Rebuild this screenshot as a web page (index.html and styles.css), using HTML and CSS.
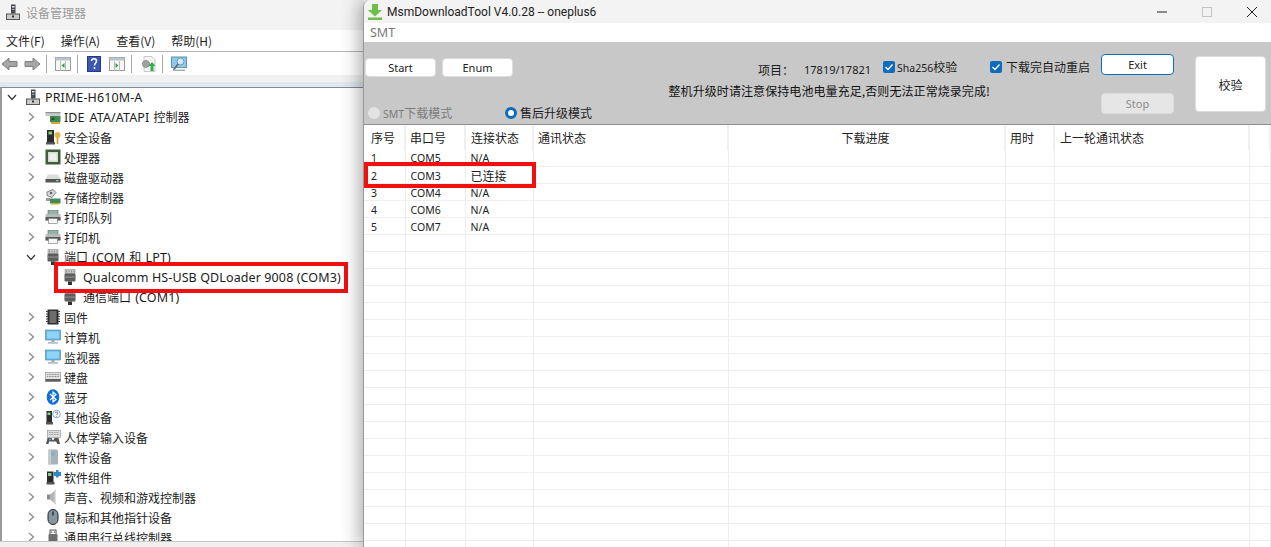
FILE: index.html
```html
<!DOCTYPE html>
<html lang="zh-CN">
<head>
<meta charset="utf-8">
<title>设备管理器 / MsmDownloadTool</title>
<link rel="stylesheet" href="styles.css">
</head>
<body>
<svg class="sprites" width="0" height="0" aria-hidden="true">
  <symbol id="chev-r" viewBox="0 0 10 10"><path d="M3 1l4.5 4L3 9" fill="none" stroke="#8c8c8c" stroke-width="1.3"/></symbol>
  <symbol id="chev-d" viewBox="0 0 10 10"><path d="M1 3l4 4.5L9 3" fill="none" stroke="#3c3c3c" stroke-width="1.3"/></symbol>
  <symbol id="pc" viewBox="0 0 16 16"><rect x="6" y="0.5" width="4.5" height="9" fill="#4a4a4a"/><rect x="7" y="2" width="2.5" height="1.5" fill="#e8e8e8"/><rect x="7" y="5" width="2.5" height="1" fill="#9ad"/><rect x="1.5" y="10" width="13" height="5.5" fill="#c9c9c9" stroke="#555"/><rect x="7" y="11.5" width="2" height="2" fill="#333"/></symbol>
  <symbol id="ide" viewBox="0 0 16 16"><rect x="0.5" y="3" width="15" height="4" fill="#c9c9c9"/><rect x="0.5" y="3" width="15" height="1.2" fill="#8f8f8f"/><rect x="5" y="7" width="10.5" height="6" fill="#3f8a55"/><rect x="6.5" y="8.5" width="3" height="2.5" fill="#1e5a34"/><rect x="6" y="13" width="9" height="2" fill="#d8a93a"/></symbol>
  <symbol id="sec" viewBox="0 0 16 16"><rect x="2" y="1" width="7" height="12" fill="#2b2b2b"/><rect x="3.5" y="2.5" width="3.5" height="3" fill="#7fd07f"/><rect x="1" y="13" width="9" height="2.5" fill="#555"/><circle cx="12.5" cy="6" r="3" fill="#e6b64d"/><rect x="11.6" y="8" width="1.8" height="7" fill="#d9a537"/></symbol>
  <symbol id="cpu" viewBox="0 0 16 16"><rect x="0.5" y="0.5" width="15" height="15" fill="#3d5f3a"/><rect x="3" y="3" width="10" height="10" fill="#d9dcd6"/><rect x="4.5" y="4.5" width="7" height="7" fill="#eef0ea"/></symbol>
  <symbol id="disk" viewBox="0 0 16 16"><path d="M3 5.5h10l2.5 4.5H.5z" fill="#dcdcdc"/><rect x="0.5" y="10" width="15" height="3.5" fill="#555"/><rect x="11" y="11" width="2.5" height="1.2" fill="#8fd48f"/></symbol>
  <symbol id="stor" viewBox="0 0 16 16"><path d="M2 3l6-2.5 3 3-4 5-5-2z" fill="#d9d9d9" stroke="#555" stroke-width=".7"/><circle cx="6" cy="4" r="1.3" fill="#666"/><rect x="5" y="9.5" width="10.5" height="5" fill="#3f8a55"/><rect x="6" y="14" width="8" height="1.5" fill="#d8a93a"/><rect x="1" y="9" width="4" height="3" fill="#999"/></symbol>
  <symbol id="print" viewBox="0 0 16 16"><rect x="3" y="1.5" width="10" height="4" fill="#8fb5a8" stroke="#666" stroke-width=".6"/><rect x="0.5" y="5" width="15" height="6.5" rx="1" fill="#b9b9b9"/><rect x="0.5" y="8" width="15" height="3.5" fill="#5b5b5b"/><rect x="3.5" y="9.5" width="9" height="5" fill="#f5f5f5" stroke="#777" stroke-width=".6"/></symbol>
  <symbol id="port" viewBox="0 0 16 16"><rect x="3" y="0.5" width="10" height="4" fill="#c8c8c8" stroke="#888" stroke-width=".5"/><path d="M4.5 1.5v2M7 1.5v2M9.5 1.5v2M12 1.5v2" stroke="#777" stroke-width=".7"/><rect x="2.5" y="4.5" width="11" height="8" rx="1" fill="#5e5e5e"/><rect x="2.5" y="7.5" width="11" height="1.2" fill="#8d8d8d"/><rect x="6" y="12.5" width="4" height="3.5" fill="#333"/></symbol>
  <symbol id="chip" viewBox="0 0 16 16"><rect x="2.5" y="0.5" width="11" height="15" rx=".5" fill="#2e2e2e"/><rect x="4.5" y="2" width="7" height="12" fill="#6d6d6d"/><path d="M1 2.5h2M1 5h2M1 7.5h2M1 10h2M1 12.5h2M13 2.5h2M13 5h2M13 7.5h2M13 10h2M13 12.5h2" stroke="#444" stroke-width="1"/></symbol>
  <symbol id="comp" viewBox="0 0 16 16"><rect x="0.5" y="1" width="15" height="10" fill="#58b7ea" stroke="#6a8aa0" stroke-width=".7"/><rect x="2" y="2.5" width="12" height="7" fill="#8fd3f5"/><rect x="6.5" y="11" width="3" height="2" fill="#9aa"/><rect x="3" y="13" width="10" height="1.8" fill="#b8c0c6"/></symbol>
  <symbol id="kbd" viewBox="0 0 16 16"><rect x="0.5" y="3.5" width="15" height="9" fill="#e2e2e2" stroke="#888" stroke-width=".6"/><path d="M2 5.500h12M2 7.500h12" stroke="#8a8a8a" stroke-width="1" stroke-dasharray="1 .6"/><rect x="0.5" y="10" width="15" height="2.500" fill="#5f5f5f"/></symbol>
  <symbol id="bt" viewBox="0 0 16 16"><ellipse cx="8" cy="8" rx="6.3" ry="7.8" fill="#0a6fd6"/><path d="M5 5l6 5.500L8 13V3l3 2.500L5 11" fill="none" stroke="#fff" stroke-width="1.2"/></symbol>
  <symbol id="other" viewBox="0 0 16 16"><rect x="1.500" y="2" width="5.500" height="11" fill="#2b2b2b"/><rect x="2.500" y="3.500" width="3" height="2.500" fill="#7fd07f"/><rect x="1" y="13" width="7" height="2.500" fill="#555"/><circle cx="11.500" cy="5" r="3.800" fill="#f1f5f8" stroke="#7d9ab5" stroke-width=".8"/><path d="M10.200 4c.3-1.400 2.600-1.200 2.600.1 0 1-1.300 1-1.300 2M11.500 7v.8" fill="none" stroke="#4a6f93" stroke-width=".8"/></symbol>
  <symbol id="hid" viewBox="0 0 16 16"><rect x="2.500" y="1.500" width="13" height="7" fill="#dedede" stroke="#8d8d8d" stroke-width=".6"/><path d="M4 3.500h10M4 5.500h10" stroke="#999" stroke-dasharray="1 .6"/><path d="M1 15l1.500-6h4l1 2h1l1-2h4l1.500 6h-2.500l-1.500-2.500h-7L3.500 15z" fill="#555"/><circle cx="5" cy="10.500" r="1" fill="#5aa9e0"/></symbol>
  <symbol id="soft" viewBox="0 0 16 16"><rect x="3" y="0.500" width="10" height="15" rx="1.500" fill="#a9b2b8"/><rect x="3" y="0.500" width="3" height="15" rx="1" fill="#c5ccd0"/><rect x="6.500" y="3.500" width="3" height="3" fill="#6db5c8"/></symbol>
  <symbol id="softc" viewBox="0 0 16 16"><rect x="2" y="2.500" width="6.500" height="10.500" fill="#2b2b2b"/><rect x="3" y="4" width="3.500" height="3" fill="#7fd07f"/><rect x="1.500" y="13" width="8" height="2.500" fill="#555"/><path d="M9 3h2V1h2.500v2H16v4h-2.500v1.500H11V7H9z" fill="#2f86d2"/></symbol>
  <symbol id="sound" viewBox="0 0 16 16"><rect x="2" y="5.500" width="3" height="5" fill="#8b8b8b"/><path d="M5 5.500L11 .5v15l-6-5z" fill="#b5b5b5"/><rect x="9.500" y="1.500" width="1.500" height="13" fill="#dedede"/></symbol>
  <symbol id="mouse" viewBox="0 0 16 16"><rect x="3" y="0.500" width="10" height="15" rx="5" fill="#8795a3" stroke="#222" stroke-width="1"/><rect x="7.300" y="2.500" width="1.400" height="4" fill="#2e2e2e"/></symbol>
  <symbol id="usb" viewBox="0 0 16 16"><rect x="5" y="1" width="6" height="5" fill="none" stroke="#555"/><rect x="3.500" y="5" width="9" height="10" rx="1" fill="#6f6f6f"/><rect x="6" y="2.500" width="1.200" height="1.200" fill="#555"/><rect x="8.800" y="2.500" width="1.200" height="1.200" fill="#555"/></symbol>
  <symbol id="tb-panel" viewBox="0 0 16 16"><rect x="0.500" y="1.500" width="15" height="13" fill="#f7f7f7" stroke="#9a9a9a"/><rect x="0.500" y="1.500" width="15" height="3" fill="#b9c4cc"/><path d="M5.500 5v9.500M10.500 5v9.500" stroke="#bcbcbc"/></symbol>
</svg>

<section class="win devmgr">
  <header class="dm-title">
    <svg class="ico" width="16" height="16"><use href="#pc"/></svg>
    <span class="dm-title-text">设备管理器</span>
  </header>
  <nav class="dm-menu">
    <span>文件(F)</span><span>操作(A)</span><span>查看(V)</span><span>帮助(H)</span>
  </nav>
  <div class="dm-tools">
    <svg class="tb" width="17" height="14" viewBox="0 0 17 14"><path d="M1 7l7-6v3.500h8v5H8V13z" fill="#a7a7a7" stroke="#7f7f7f"/></svg>
    <svg class="tb tb-fwd" width="17" height="14" viewBox="0 0 17 14"><path d="M16 7L9 1v3.500H1v5h8V13z" fill="#a7a7a7" stroke="#7f7f7f"/></svg>
    <i class="sep"></i>
    <svg class="tb" width="16" height="16" viewBox="0 0 16 16"><use href="#tb-panel"/><path d="M9.500 7v5L6.500 9.500z" fill="#3c9a4a"/></svg>
    <i class="sep sep-wide"></i>
    <svg class="tb tb-help" width="14" height="16" viewBox="0 0 14 16"><rect x=".5" y=".5" width="13" height="15" fill="#3a57b5" stroke="#26398a"/><path d="M4.500 5c0-3 5-3 5 0 0 2-2 2-2 4.500M7.500 11v2" fill="none" stroke="#fff" stroke-width="1.500"/></svg>
    <svg class="tb" width="16" height="16" viewBox="0 0 16 16"><use href="#tb-panel"/><path d="M6.500 7v5l3-2.500z" fill="#3c9a4a"/></svg>
    <i class="sep"></i>
    <svg class="tb" width="16" height="16" viewBox="0 0 16 16"><path d="M4 .5h8l3 3v12H4z" fill="#f4f4f4" stroke="#b5b5b5" stroke-width=".7"/><circle cx="6" cy="8" r="3.500" fill="#a0a0a0" stroke="#7d7d7d" stroke-dasharray="1.500 .7"/><path d="M12 6l3.500 4H13.500v5h-3v-5H8.500z" fill="#2fb04c"/></svg>
    <i class="sep"></i>
    <svg class="tb" width="16" height="16" viewBox="0 0 16 16"><rect x=".5" y="1" width="15" height="10.500" fill="#8ecbea" stroke="#5f93ae"/><circle cx="9.500" cy="5.500" r="3.500" fill="#cfe9f6" stroke="#6f97ad"/><path d="M7 8l-4.500 6" stroke="#666" stroke-width="1.500"/><rect x="2" y="13.500" width="12" height="1.500" fill="#9fb0ba"/></svg>
  </div>
  <div class="dm-band"></div>
  <div class="tree">
    <div class="row l0"><svg class="chev" width="10" height="10"><use href="#chev-d"/></svg><svg class="ico" width="16" height="16"><use href="#pc"/></svg><span class="lat">PRIME-H610M-A</span></div>
    <div class="row l1"><svg class="chev" width="10" height="10"><use href="#chev-r"/></svg><svg class="ico" width="16" height="16"><use href="#ide"/></svg><span class="mix"><span class="lat">IDE ATA/ATAPI</span> 控制器</span></div>
    <div class="row l1"><svg class="chev" width="10" height="10"><use href="#chev-r"/></svg><svg class="ico" width="16" height="16"><use href="#sec"/></svg><span>安全设备</span></div>
    <div class="row l1"><svg class="chev" width="10" height="10"><use href="#chev-r"/></svg><svg class="ico" width="16" height="16"><use href="#cpu"/></svg><span>处理器</span></div>
    <div class="row l1"><svg class="chev" width="10" height="10"><use href="#chev-r"/></svg><svg class="ico" width="16" height="16"><use href="#disk"/></svg><span>磁盘驱动器</span></div>
    <div class="row l1"><svg class="chev" width="10" height="10"><use href="#chev-r"/></svg><svg class="ico" width="16" height="16"><use href="#stor"/></svg><span>存储控制器</span></div>
    <div class="row l1"><svg class="chev" width="10" height="10"><use href="#chev-r"/></svg><svg class="ico" width="16" height="16"><use href="#print"/></svg><span>打印队列</span></div>
    <div class="row l1"><svg class="chev" width="10" height="10"><use href="#chev-r"/></svg><svg class="ico" width="16" height="16"><use href="#print"/></svg><span>打印机</span></div>
    <div class="row l1"><svg class="chev" width="10" height="10"><use href="#chev-d"/></svg><svg class="ico" width="16" height="16"><use href="#port"/></svg><span class="mix">端口 <span class="lat">(COM</span> 和 <span class="lat">LPT)</span></span></div>
    <div class="row l2"><svg class="ico" width="16" height="16"><use href="#port"/></svg><span class="lat">Qualcomm HS-USB QDLoader 9008 (COM3)</span></div>
    <div class="row l2"><svg class="ico" width="16" height="16"><use href="#port"/></svg><span class="mix">通信端口 <span class="lat">(COM1)</span></span></div>
    <div class="row l1"><svg class="chev" width="10" height="10"><use href="#chev-r"/></svg><svg class="ico" width="16" height="16"><use href="#chip"/></svg><span>固件</span></div>
    <div class="row l1"><svg class="chev" width="10" height="10"><use href="#chev-r"/></svg><svg class="ico" width="16" height="16"><use href="#comp"/></svg><span>计算机</span></div>
    <div class="row l1"><svg class="chev" width="10" height="10"><use href="#chev-r"/></svg><svg class="ico" width="16" height="16"><use href="#comp"/></svg><span>监视器</span></div>
    <div class="row l1"><svg class="chev" width="10" height="10"><use href="#chev-r"/></svg><svg class="ico" width="16" height="16"><use href="#kbd"/></svg><span>键盘</span></div>
    <div class="row l1"><svg class="chev" width="10" height="10"><use href="#chev-r"/></svg><svg class="ico" width="16" height="16"><use href="#bt"/></svg><span>蓝牙</span></div>
    <div class="row l1"><svg class="chev" width="10" height="10"><use href="#chev-r"/></svg><svg class="ico" width="16" height="16"><use href="#other"/></svg><span>其他设备</span></div>
    <div class="row l1"><svg class="chev" width="10" height="10"><use href="#chev-r"/></svg><svg class="ico" width="16" height="16"><use href="#hid"/></svg><span>人体学输入设备</span></div>
    <div class="row l1"><svg class="chev" width="10" height="10"><use href="#chev-r"/></svg><svg class="ico" width="16" height="16"><use href="#soft"/></svg><span>软件设备</span></div>
    <div class="row l1"><svg class="chev" width="10" height="10"><use href="#chev-r"/></svg><svg class="ico" width="16" height="16"><use href="#softc"/></svg><span>软件组件</span></div>
    <div class="row l1"><svg class="chev" width="10" height="10"><use href="#chev-r"/></svg><svg class="ico" width="16" height="16"><use href="#sound"/></svg><span>声音、视频和游戏控制器</span></div>
    <div class="row l1"><svg class="chev" width="10" height="10"><use href="#chev-r"/></svg><svg class="ico" width="16" height="16"><use href="#mouse"/></svg><span>鼠标和其他指针设备</span></div>
    <div class="row l1"><svg class="chev" width="10" height="10"><use href="#chev-r"/></svg><svg class="ico" width="16" height="16"><use href="#usb"/></svg><span>通用串行总线控制器</span></div>
  </div>
  <div class="dm-status"></div>
  <div class="callout callout-port"></div>
</section>

<section class="win msm">
  <header class="ms-title">
    <svg class="ms-logo" width="16" height="16" viewBox="0 0 16 16"><path d="M5 0h6v6h4l-7 6.500L1 6h4z" fill="#6cc04a"/><rect x="1" y="13.500" width="14" height="2.500" fill="#6cc04a"/></svg>
    <span class="ms-title-text">MsmDownloadTool V4.0.28 -- oneplus6</span>
    <div class="caps">
      <svg width="12" height="12" viewBox="0 0 12 12"><path d="M1 6h10" stroke="#222"/></svg>
      <svg width="12" height="12" viewBox="0 0 12 12"><rect x="1.500" y="1.500" width="9" height="9" fill="none" stroke="#c4c4c4"/></svg>
      <svg width="12" height="12" viewBox="0 0 12 12"><path d="M1 1l10 10M11 1L1 11" stroke="#222"/></svg>
    </div>
  </header>
  <div class="ms-menu">SMT</div>
  <div class="panel">
    <div class="panel-main">
      <div class="top-row">
        <button class="btn btn-l">Start</button>
        <button class="btn btn-l">Enum</button>
        <span class="proj">项目：</span>
        <span class="proj-num">17819/17821</span>
        <label class="chk chk-a"><i class="box"><svg width="10" height="10" viewBox="0 0 10 10"><path d="M1.500 5l2.500 2.500 4.500-5" fill="none" stroke="#fff" stroke-width="1.300"/></svg></i><span><span class="small">Sha256</span>校验</span></label>
        <label class="chk chk-b"><i class="box"><svg width="10" height="10" viewBox="0 0 10 10"><path d="M1.500 5l2.500 2.500 4.500-5" fill="none" stroke="#fff" stroke-width="1.300"/></svg></i><span>下载完自动重启</span></label>
      </div>
      <p class="warn">整机升级时请注意保持电池电量充足,否则无法正常烧录完成!</p>
      <div class="radios">
        <label class="radio off"><i class="dot"></i><span><span class="small">SMT</span>下载模式</span></label>
        <label class="radio on"><i class="dot"></i><span>售后升级模式</span></label>
      </div>
    </div>
    <div class="panel-act">
      <button class="btn btn-exit">Exit</button>
      <button class="btn btn-stop" disabled>Stop</button>
    </div>
    <button class="btn btn-check">校验</button>
  </div>
  <div class="grid-wrap">
    <table class="grid">
      <colgroup><col class="c1"><col class="c2"><col class="c3"><col class="c4"><col class="c5"><col class="c6"><col class="c7"><col></colgroup>
      <thead><tr><th>序号</th><th>串口号</th><th>连接状态</th><th>通讯状态</th><th class="mid">下载进度</th><th>用时</th><th>上一轮通讯状态</th><th></th></tr></thead>
      <tbody>
        <tr><td>1</td><td>COM5</td><td>N/A</td><td></td><td></td><td></td><td></td><td></td></tr>
        <tr><td>2</td><td>COM3</td><td class="big">已连接</td><td></td><td></td><td></td><td></td><td></td></tr>
        <tr><td>3</td><td>COM4</td><td>N/A</td><td></td><td></td><td></td><td></td><td></td></tr>
        <tr><td>4</td><td>COM6</td><td>N/A</td><td></td><td></td><td></td><td></td><td></td></tr>
        <tr><td>5</td><td>COM7</td><td>N/A</td><td></td><td></td><td></td><td></td><td></td></tr>
        <tr><td></td><td></td><td></td><td></td><td></td><td></td><td></td><td></td></tr>
        <tr><td></td><td></td><td></td><td></td><td></td><td></td><td></td><td></td></tr>
        <tr><td></td><td></td><td></td><td></td><td></td><td></td><td></td><td></td></tr>
        <tr><td></td><td></td><td></td><td></td><td></td><td></td><td></td><td></td></tr>
        <tr><td></td><td></td><td></td><td></td><td></td><td></td><td></td><td></td></tr>
        <tr><td></td><td></td><td></td><td></td><td></td><td></td><td></td><td></td></tr>
        <tr><td></td><td></td><td></td><td></td><td></td><td></td><td></td><td></td></tr>
        <tr><td></td><td></td><td></td><td></td><td></td><td></td><td></td><td></td></tr>
        <tr><td></td><td></td><td></td><td></td><td></td><td></td><td></td><td></td></tr>
        <tr><td></td><td></td><td></td><td></td><td></td><td></td><td></td><td></td></tr>
        <tr><td></td><td></td><td></td><td></td><td></td><td></td><td></td><td></td></tr>
        <tr><td></td><td></td><td></td><td></td><td></td><td></td><td></td><td></td></tr>
        <tr><td></td><td></td><td></td><td></td><td></td><td></td><td></td><td></td></tr>
        <tr><td></td><td></td><td></td><td></td><td></td><td></td><td></td><td></td></tr>
        <tr><td></td><td></td><td></td><td></td><td></td><td></td><td></td><td></td></tr>
        <tr><td></td><td></td><td></td><td></td><td></td><td></td><td></td><td></td></tr>
        <tr><td></td><td></td><td></td><td></td><td></td><td></td><td></td><td></td></tr>
        <tr><td></td><td></td><td></td><td></td><td></td><td></td><td></td><td></td></tr>
        <tr><td></td><td></td><td></td><td></td><td></td><td></td><td></td><td></td></tr>
      </tbody>
    </table>
    <div class="callout callout-row"></div>
  </div>
</section>
</body>
</html>
```
FILE: styles.css
```css
* { box-sizing: border-box; }
html, body { margin: 0; height: 100%; }
body {
  position: relative;
  width: 1271px;
  height: 547px;
  overflow: hidden;
  background: #fff;
  font-family: "Noto Sans CJK SC", "Noto Sans", sans-serif;
  font-size: 12px;
  color: #1c1c1c;
}
.sprites { position: absolute; }
.win { position: absolute; top: 0; height: 547px; display: flex; flex-direction: column; }
svg { display: block; flex: none; }

/* Device manager */
.devmgr { left: 0; width: 364px; background: #fff; }
.dm-title { height: 30px; background: #f3f3f3; display: flex; align-items: center; gap: 5px; padding: 0 0 6px 5px; flex: none; }
.dm-title-text { color: #9b9b9b; font-size: 12px; }
.dm-menu { height: 22px; display: flex; align-items: center; gap: 16px; padding-left: 6px; flex: none; border-bottom: 1px solid #b5b5b5; }
.dm-tools { height: 23px; display: flex; align-items: center; padding-left: 1px; flex: none; background: #fff; }
.tb { margin-right: 6px; }
.tb-fwd { margin-right: 5px; }
.tb-help { margin-right: 8px; }
.sep { width: 1px; height: 18px; background: #a8a8a8; margin-right: 8px; flex: none; }
.sep-wide { margin-right: 9px; }
.dm-band { height: 12px; flex: none; background: linear-gradient(#f1f1f1 0 7px, #dfe7f0 7px); }
.tree { flex: 1; min-height: 0; overflow: hidden; border-top: 1px solid #8a8a8a; border-left: 2px solid #9a9a9a; }
.row { height: 20px; display: flex; align-items: center; white-space: nowrap; }
.l0 { padding-left: 5px; margin-top: -1px; }
.l0 .ico { margin: 0 4px 0 8px; }
.l1 { padding-left: 24px; }
.l1 .ico { margin: 0 3px 0 9px; }
.l2 .ico { margin: 0 5px 0 60px; }
.lat { font-family: "Noto Sans", sans-serif; font-size: 12.5px; letter-spacing: .11px; }
.mix { word-spacing: 1.5px; }
.dm-status { height: 6px; flex: none; background: #f0f0f0; border-top: 1px solid #c8c8c8; }
.callout { position: absolute; border: 4px solid #f01010; }
.callout-port { left: 54px; top: 262px; width: 294px; height: 31px; }
.callout-row { left: 0; top: 37px; width: 172px; height: 26px; }

/* Msm tool */
.msm { left: 363px; width: 908px; background: #fff; border-left: 1px solid #9a9a9a; border-top-left-radius: 7px; box-shadow: -4px 0 18px rgba(0,0,0,.32); }
.ms-title { height: 23px; background: #f3f3f3; display: flex; align-items: center; padding-left: 3px; flex: none; border-top-left-radius: 7px; }
.ms-logo { margin-right: 4px; }
.ms-title-text { font-family: Roboto, sans-serif; font-size: 12px; color: #222; }
.caps { margin-left: auto; display: flex; gap: 33px; padding-right: 13px; }
.ms-menu { height: 19px; flex: none; background: #fff; color: #777; font-family: "Noto Sans", sans-serif; font-size: 12.5px; padding-left: 6px; line-height: 20px; }
.panel { height: 83px; flex: none; display: flex; background: #c8c8c8; border-bottom: 1px solid #8e8e8e; padding: 12px 5px 0 0; }
.panel-main { flex: none; width: 737px; }
.top-row { display: flex; align-items: center; height: 25px; padding-left: 1px; }
.btn { font-family: "Noto Sans", "Noto Sans CJK SC", sans-serif; font-size: 11px; padding: 0; background: #fff; border: 1px solid #dcdcdc; border-radius: 4px; color: #222; }
.btn-l { width: 71px; height: 19px; margin-right: 6px; margin-top: 1px; }
.proj { margin-left: 239px; margin-top: 6px; width: 46px; }
.proj-num { font-family: "Noto Sans", sans-serif; font-size: 11px; width: 79px; margin-top: 6px; }
.chk { display: flex; align-items: center; }
.box { width: 12px; height: 12px; background: #0f6cbd; border-radius: 2px; margin-right: 2px; display: flex; align-items: center; justify-content: center; }
.chk-a { width: 107px; }
.chk-b .box { margin-right: 4px; }
.small { font-family: "Noto Sans", sans-serif; font-size: 10.5px; }
.warn { margin: 0; text-align: right; padding-right: 111px; height: 23px; line-height: 24px; font-size: 12px; letter-spacing: .08px; color: #111; }
.radios { display: flex; align-items: center; padding-left: 4px; margin-top: 2px; }
.radio { display: flex; align-items: center; gap: 3px; }
.radio.off { color: #7c7c7c; width: 137px; }
.dot { width: 12px; height: 12px; border-radius: 50%; background: #e3e3e3; }
.radio.on .dot { background: #fff; border: 3.500px solid #0f6cbd; }
.panel-act { width: 94px; display: flex; flex-direction: column; gap: 18px; }
.btn-exit { width: 73px; height: 21px; border: 1px solid #0f6cbd; }
.btn-stop { width: 73px; height: 21px; background: #e6e6e6; color: #8c8c8c; }
.btn-check { width: 71px; height: 56px; margin-top: 2px; font-family: "Noto Sans CJK SC", sans-serif; font-size: 12px; }

/* Grid */
.grid-wrap { position: relative; flex: 1; min-height: 0; overflow: hidden; background: #fff; }
.grid { border-collapse: collapse; table-layout: fixed; width: 907px; }
.c1 { width: 41px; } .c2 { width: 60px; } .c3 { width: 68px; } .c4 { width: 195px; }
.c5 { width: 277px; } .c6 { width: 49px; } .c7 { width: 195px; }
.grid th { height: 25px; font-weight: 400; font-size: 12px; text-align: left; padding: 0 0 0 5px; border-right: 2px solid #efefef; white-space: nowrap; overflow: hidden; color: #222; }
.grid th:first-child { padding-left: 7px; }
.grid th:nth-child(2), .grid th:nth-child(4), .grid th:nth-child(6) { padding-left: 4px; }
.grid th.mid { text-align: center; padding: 0 2px 0 0; }
.grid td { height: 17px; padding: 2px 0 0 5px; font-family: "Noto Sans", sans-serif; font-size: 10.500px; line-height: 14px; border-right: 1px solid #eeeeee; border-bottom: 1px solid #eeeeee; overflow: hidden; white-space: nowrap; color: #222; }
.grid td:first-child { padding-left: 7px; }
.grid tbody tr:first-child td { height: 16px; line-height: 13px; }
.grid td.big { font-family: "Noto Sans CJK SC", sans-serif; font-size: 12px; line-height: 14px; }
```
